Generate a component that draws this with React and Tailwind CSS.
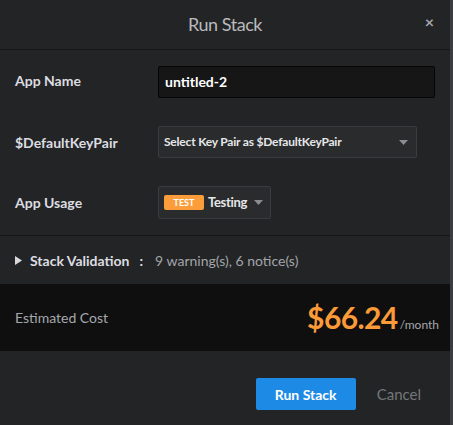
const Caret = () => (
  <svg width="9" height="5" viewBox="0 0 9 5" className="fill-[#8a8c90]">
    <path d="M0 0h9L4.5 5z" />
  </svg>
);

const App = () => {
  return (
    <div className="w-[453px] h-[425px] bg-[#232426] flex font-['Lato',sans-serif] overflow-hidden">
      <div className="w-[450px] h-full flex flex-col">
        {/* Header */}
        <div className="h-[50px] shrink-0 border-b border-[#151617] flex items-center justify-center relative">
          <h1 className="text-[18px] text-[#b8babd] tracking-tight">Run Stack</h1>
          <button className="absolute right-[16px] top-[14px] text-[16px] leading-none text-[#a4a7ad] font-bold">&times;</button>
        </div>

        {/* Form */}
        <div className="flex flex-col px-[15px] pt-[16px]">
          <div className="flex items-center h-[31px]">
            <label className="w-[143px] text-[14px] font-bold text-[#dcdde0] -mt-[3px]">App Name</label>
            <div className="w-[277px] h-[32px] bg-[#161617] border border-[#050505] rounded-[2px] flex items-center px-[6px] text-[14px] font-bold text-white">
              untitled-2
            </div>
          </div>

          <div className="flex items-center h-[32px] mt-[29px]">
            <label className="w-[143px] text-[14px] font-bold text-[#dcdde0]">$DefaultKeyPair</label>
            <div className="w-[259px] h-[32px] bg-[#2a2b2d] border border-[#3a3b3e] rounded-[2px] flex items-center justify-between pl-[5px] pr-[8px]">
              <span className="text-[12px] font-bold text-[#e6e7e9] tracking-[-0.2px]">Select Key Pair as $DefaultKeyPair</span>
              <Caret />
            </div>
          </div>

          <div className="flex items-center h-[33px] mt-[28px]">
            <label className="w-[143px] text-[14px] font-bold text-[#dcdde0]">App Usage</label>
            <div className="w-[113px] h-[33px] bg-[#2a2b2d] border border-[#3a3b3e] rounded-[2px] flex items-center pl-[5px] pr-[7px]">
              <span className="w-[40px] h-[15px] bg-[#fb9d3a] rounded-[2px] text-[9px] font-bold text-white flex items-center justify-center">TEST</span>
              <span className="ml-[4px] text-[13px] font-bold text-[#e6e7e9] tracking-[-0.3px]">Testing</span>
              <span className="ml-auto"><Caret /></span>
            </div>
          </div>
        </div>

        {/* Validation */}
        <div className="mt-[16px] border-t border-[#151617] h-[49px] shrink-0 flex items-center px-[15px] text-[14px]">
          <svg width="7" height="9" viewBox="0 0 7 9" className="fill-[#d8d9dc] mr-[8px]">
            <path d="M0 0l7 4.5L0 9z" />
          </svg>
          <span className="font-bold text-[#dcdde0]">Stack Validation</span>
          <span className="font-bold text-[#dcdde0] ml-[10px]">:</span>
          <span className="text-[#a2a4a8] ml-[12px]">9 warning(s), 6 notice(s)</span>
        </div>

        {/* Cost */}
        <div className="h-[67px] shrink-0 bg-[#0f0f10] flex items-center justify-between pl-[15px] pr-[11px]">
          <span className="text-[14px] text-[#a6a8ac]">Estimated Cost</span>
          <div className="flex items-baseline">
            <span className="text-[30px] font-bold text-[#fb9a37] tracking-[-0.6px]">$66.24</span>
            <span className="text-[12px] text-[#a6a8ac] ml-[2px]">/month</span>
          </div>
        </div>

        {/* Footer */}
        <div className="flex-1 flex items-center justify-end pr-[29px] pt-[12px]">
          <button className="w-[100px] h-[32px] bg-[#1d8be6] rounded-[2px] text-[14px] font-bold text-white">Run Stack</button>
          <button className="ml-[21px] text-[15px] text-[#74767a]">Cancel</button>
        </div>
      </div>
      <div className="w-[3px] h-full bg-[#3a3c40]" />
    </div>
  );
};

export default App;
